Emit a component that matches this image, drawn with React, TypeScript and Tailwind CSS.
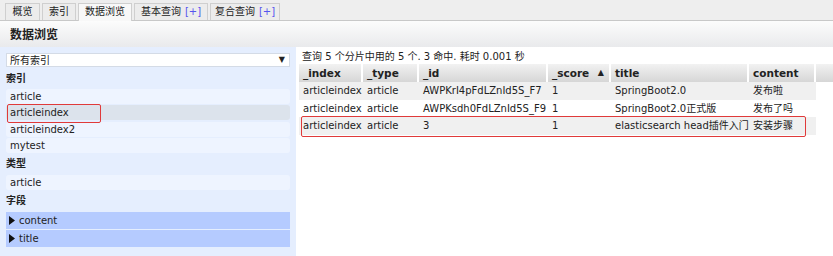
import React from 'react';

const font = '"DejaVu Sans", "Noto Sans CJK SC", sans-serif';

const tabs = [
  { label: '概览', w: 'w-[35px]' },
  { label: '索引', w: 'w-[34px]' },
  { label: '数据浏览', w: 'w-[54px]', active: true },
  { label: '基本查询', plus: true, w: 'w-[74px]' },
  { label: '复合查询', plus: true, w: 'w-[70px]' },
];

const cols = [
  { key: '_index', w: 'w-[64px]' },
  { key: '_type', w: 'w-[56px]' },
  { key: '_id', w: 'w-[129px]' },
  { key: '_score', w: 'w-[63px]', sort: true },
  { key: 'title', w: 'w-[138px]' },
  { key: 'content', w: 'w-[67px]' },
];

const rows = [
  ['articleindex', 'article', 'AWPKrI4pFdLZnId5S_F7', '1', 'SpringBoot2.0', '发布啦'],
  ['articleindex', 'article', 'AWPKsdh0FdLZnId5S_F9', '1', 'SpringBoot2.0正式版', '发布了吗'],
  ['articleindex', 'article', '3', '1', 'elasticsearch head插件入门', '安装步骤'],
];

function Item({ children, selected }: { children: React.ReactNode; selected?: boolean }) {
  return (
    <div
      className={`h-[15px] leading-[15px] px-[4px] rounded-[3px] ${
        selected ? 'bg-[#dce3ec]' : 'bg-[#eef4ff]'
      }`}
    >
      {children}
    </div>
  );
}

function Label({ children }: { children: React.ReactNode }) {
  return <div className="h-[18px] leading-[18px] font-bold text-[10px]">{children}</div>;
}

export default function App() {
  return (
    <div
      className="w-[833px] h-[256px] overflow-hidden bg-white text-[10px] text-[#222]"
      style={{ fontFamily: font }}
    >
      {/* tabs */}
      <div className="h-[21px] bg-[#eeeeee] border-b border-[#c8c8c8] flex items-end pl-[5px] gap-[2px]">
        {tabs.map((t) => (
          <div
            key={t.label}
            className={`${t.w} h-[17px] leading-[16px] text-center border border-b-0 border-[#cfcfcf] ${
              t.active ? 'bg-[#f8f8f8] h-[18px] -mb-px' : 'bg-[#ececec]'
            }`}
          >
            {t.label}
            {t.plus && <span className="text-[#5555ee] ml-[4px]">[+]</span>}
          </div>
        ))}
      </div>

      {/* header */}
      <div className="h-[26px] bg-gradient-to-b from-[#fcfcfc] to-[#e9eaec] pl-[10px] leading-[28px] font-bold text-[12px]">
        数据浏览
      </div>

      <div className="flex">
        {/* left */}
        <div className="w-[296px] h-[209px] bg-[#e5eefe] px-[6px] pt-[6px] relative">
          <div className="h-[14px] bg-white border border-[#d4dbe6] flex items-center justify-between pl-[3px] pr-[4px]">
            <span>所有索引</span>
            <span className="text-[8px]">▼</span>
          </div>
          <div className="mt-[3px]">
            <Label>索引</Label>
          </div>
          <div className="flex flex-col gap-[1.4px] mt-[1px]">
            <Item>article</Item>
            <Item selected>articleindex</Item>
            <Item>articleindex2</Item>
            <Item>mytest</Item>
          </div>
          <div className="mt-[2px]">
            <Label>类型</Label>
          </div>
          <div className="mt-[2px]">
            <Item>article</Item>
          </div>
          <div className="mt-[2px]">
            <Label>字段</Label>
          </div>
          <div className="flex flex-col gap-[1px] mt-[2px]">
            {['content', 'title'].map((f) => (
              <div key={f} className="h-[17px] leading-[17px] bg-[#b5cbff] px-[3px] flex items-center gap-[4px]">
                <svg width="6" height="9" viewBox="0 0 6 9">
                  <path d="M0 0 L6 4.5 L0 9 Z" fill="#111" />
                </svg>
                <span>{f}</span>
              </div>
            ))}
          </div>
          <div className="absolute left-[7px] top-[57px] w-[94px] h-[19px] border border-[#e03a3a] rounded-[2px]" />
        </div>

        {/* right */}
        <div className="flex-1 pl-[3px] pt-[3px] relative">
          <div className="pl-[3px] h-[14px] leading-[14px]">查询 5 个分片中用的 5 个. 3 命中. 耗时 0.001 秒</div>
          <div className="flex h-[18px] bg-gradient-to-b from-[#f2f2f2] to-[#d6d6d6] font-bold text-[10.5px]">
            {cols.map((c) => (
              <div
                key={c.key}
                className={`${c.w} shrink-0 border-r-2 border-white px-[4px] leading-[18px] flex items-center justify-between`}
              >
                <span>{c.key}</span>
                {c.sort && <span className="text-[8px] mr-[1px]">▲</span>}
              </div>
            ))}
            <div className="flex-1" />
          </div>
          {rows.map((r, i) => (
            <div key={i} className={`flex w-[517px] h-[17.5px] ${i % 2 === 0 ? 'bg-[#f0f0f0]' : 'bg-white'}`}>
              {r.map((v, j) => (
                <div key={j} className={`${cols[j].w} shrink-0 px-[4px] leading-[17.5px] whitespace-nowrap`}>
                  {v}
                </div>
              ))}
            </div>
          ))}
          <div className="absolute left-[5px] top-[69px] w-[505px] h-[21px] border border-[#e03a3a] rounded-[2px]" />
        </div>
      </div>
    </div>
  );
}
